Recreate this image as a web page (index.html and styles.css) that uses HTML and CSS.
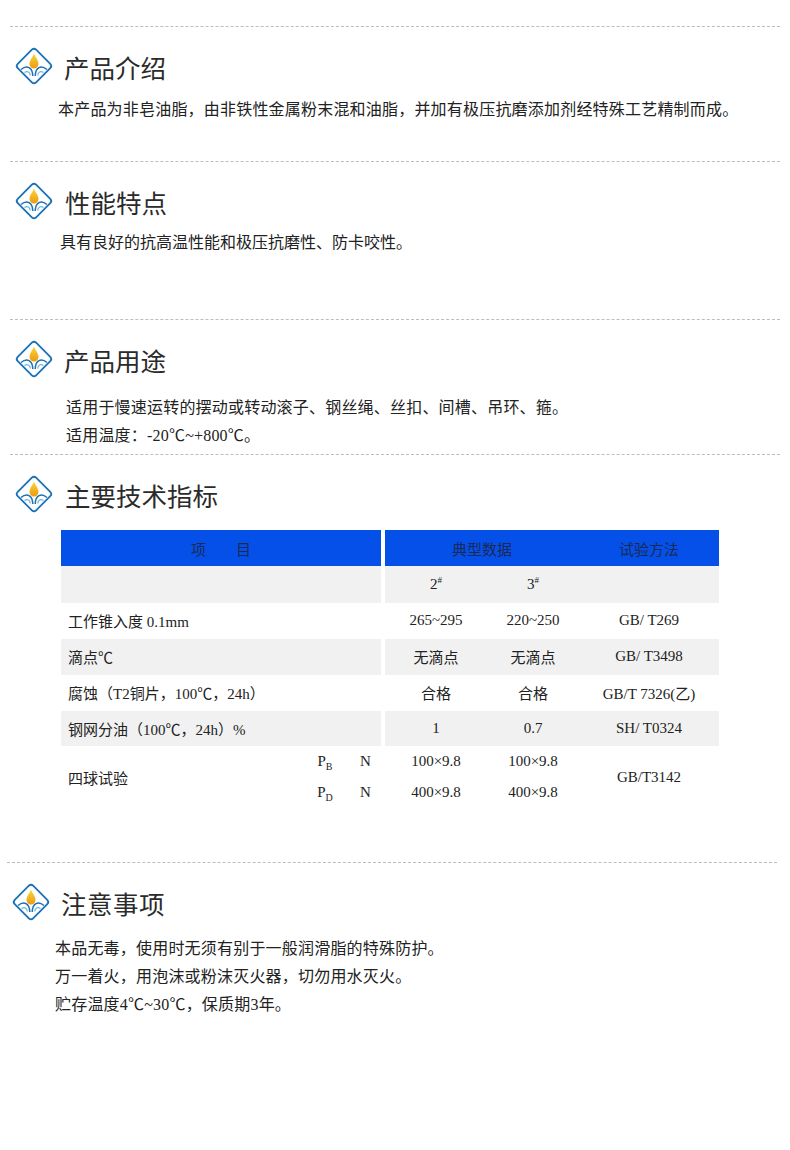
FILE: index.html
```html
<!DOCTYPE html>
<html lang="zh">
<head>
<meta charset="utf-8">
<title>产品介绍</title>
<link rel="stylesheet" href="styles.css">
</head>
<body>
<svg class="defs" width="0" height="0" aria-hidden="true">
  <defs>
    <linearGradient id="drop" x1="0" y1="0" x2="0" y2="1">
      <stop offset="0" stop-color="#f7d83a"/>
      <stop offset="1" stop-color="#ee9a12"/>
    </linearGradient>
    <symbol id="logo" viewBox="0 0 40 40">
      <rect x="7" y="7" width="26" height="26" rx="3" transform="rotate(45 20 20)" fill="#fff" stroke="#1b72b5" stroke-width="1.8"/>
      <path d="M20 7.5C21 11 24.5 14 24.5 18A4.5 4.5 0 0 1 15.5 18C15.5 14 19 11 20 7.5Z" fill="url(#drop)"/>
      <path d="M7 23.5C13 18.5 18.5 21.5 18.8 30M33 23.5C27 18.5 21.500 21.500 21.200 30" fill="none" stroke="#1b72b5" stroke-width="1.5"/>
      <path d="M10.500 26.500C13.500 24.500 16 26 16.300 29.500M29.500 26.500C26.500 24.500 24 26 23.700 29.500" fill="none" stroke="#6db3dd" stroke-width="1.200"/>
    </symbol>
  </defs>
</svg>

<section class="sec sec-intro">
  <h2 class="head"><svg class="logo"><use href="#logo"/></svg><span>产品介绍</span></h2>
  <p class="copy">本产品为非皂油脂，由非铁性金属粉末混和油脂，并加有极压抗磨添加剂经特殊工艺精制而成。</p>
</section>

<section class="sec sec-feat">
  <h2 class="head"><svg class="logo"><use href="#logo"/></svg><span>性能特点</span></h2>
  <p class="copy">具有良好的抗高温性能和极压抗磨性、防卡咬性。</p>
</section>

<section class="sec sec-use">
  <h2 class="head"><svg class="logo"><use href="#logo"/></svg><span>产品用途</span></h2>
  <p class="copy">适用于慢速运转的摆动或转动滚子、钢丝绳、丝扣、间槽、吊环、箍。</p>
  <p class="copy">适用温度：-20℃~+800℃。</p>
</section>

<section class="sec sec-spec">
  <h2 class="head"><svg class="logo"><use href="#logo"/></svg><span>主要技术指标</span></h2>
  <table class="spec">
    <colgroup>
      <col class="c-label"><col class="c-p"><col class="c-n"><col class="c-gap"><col class="c-d1"><col class="c-d2"><col class="c-m">
    </colgroup>
    <tr class="r-head">
      <th colspan="3">项　　目</th><td class="gap"></td><th colspan="2">典型数据</th><th>试验方法</th>
    </tr>
    <tr class="r-grade alt">
      <td colspan="3"></td><td class="gap"></td><td>2<sup>#</sup></td><td>3<sup>#</sup></td><td></td>
    </tr>
    <tr class="r-a">
      <td colspan="3" class="label">工作锥入度 0.1mm</td><td class="gap"></td><td>265~295</td><td>220~250</td><td>GB/ T269</td>
    </tr>
    <tr class="r-b alt">
      <td colspan="3" class="label">滴点℃</td><td class="gap"></td><td>无滴点</td><td>无滴点</td><td>GB/ T3498</td>
    </tr>
    <tr class="r-a">
      <td colspan="3" class="label">腐蚀（T2铜片，100℃，24h）</td><td class="gap"></td><td>合格</td><td>合格</td><td>GB/T 7326(乙)</td>
    </tr>
    <tr class="r-a alt">
      <td colspan="3" class="label">钢网分油（100℃，24h）%</td><td class="gap"></td><td>1</td><td>0.7</td><td>SH/ T0324</td>
    </tr>
    <tr class="r-ball">
      <td rowspan="2" class="label">四球试验</td><td>P<sub>B</sub></td><td>N</td><td class="gap"></td><td>100×9.8</td><td>100×9.8</td><td rowspan="2">GB/T3142</td>
    </tr>
    <tr class="r-ball">
      <td>P<sub>D</sub></td><td>N</td><td class="gap"></td><td>400×9.8</td><td>400×9.8</td>
    </tr>
  </table>
</section>

<section class="sec sec-note">
  <h2 class="head"><svg class="logo"><use href="#logo"/></svg><span>注意事项</span></h2>
  <p class="copy">本品无毒，使用时无须有别于一般润滑脂的特殊防护。</p>
  <p class="copy">万一着火，用泡沫或粉沫灭火器，切勿用水灭火。</p>
  <p class="copy">贮存温度4℃~30℃，保质期3年。</p>
</section>
</body>
</html>
```

FILE: styles.css
```css
* { box-sizing: border-box; }
html, body { margin: 0; padding: 0; background: #fff; }
body {
  width: 790px;
  height: 1150px;
  overflow: hidden;
  padding-top: 26px;
  color: #222;
  font-family: "Liberation Serif", "Noto Sans CJK SC", serif;
}
.defs { position: absolute; }

.sec {
  width: 770px;
  margin-left: 10px;
  border-top: 1px dashed #bdbdbd;
  padding-top: 19px;
}
.sec-intro { height: 135px; }
.sec-feat { height: 158px; }
.sec-use { height: 135px; }
.sec-spec { height: 408px; }
.sec-note { margin-left: 7px; }

.head {
  display: flex;
  align-items: center;
  height: 40px;
  margin: 0;
  padding-left: 4px;
  font-size: 25.500px;
  font-weight: 400;
  color: #2b2b2b;
  font-family: "Noto Sans CJK SC", sans-serif;
}
.logo { width: 40px; height: 40px; margin-right: 10px; flex: none; }
.sec-feat .head .logo { margin-right: 11px; }
.sec-spec .head .logo { margin-right: 11px; }
.sec-note .head span { letter-spacing: .5px; }

.copy {
  margin: 0;
  font-size: 16px;
  line-height: 28px;
  letter-spacing: .2px;
  color: #222;
}
.sec-intro .copy { margin: 10px 0 0 48px; }
.sec-feat .copy { margin: 8px 0 0 50px; letter-spacing: 0; }
.sec-use .head + .copy { margin-top: 15px; }
.sec-use .copy { margin-left: 56px; letter-spacing: .2px; }
.sec-note .head + .copy { margin-top: 13px; }
.sec-note .copy { margin-left: 48px; letter-spacing: .2px; }

.spec {
  table-layout: fixed;
  border-collapse: collapse;
  width: 658px;
  margin: 16px 0 0 51px;
  font-size: 15px;
  text-align: center;
}
.c-label { width: 239px; }
.c-p { width: 50px; }
.c-n { width: 31px; }
.c-gap { width: 4px; }
.c-d1 { width: 102px; }
.c-d2 { width: 92px; }
.c-m { width: 140px; }
.spec th, .spec td { padding: 0; font-weight: 400; }
.r-head { height: 36px; }
.r-head th { background: #0650ea; color: #1a2a55; }
.r-grade { height: 37px; }
.r-a { height: 35.500px; }
.r-b { height: 36.500px; }
.r-ball { height: 31px; }
.alt td { background: #f1f1f1; }
.spec td.gap { background: #fff; }
.spec td.label { text-align: left; padding-left: 7px; }
.spec sup { font-size: 9px; line-height: 0; }
.spec sub { font-size: 10px; line-height: 0; }
```
